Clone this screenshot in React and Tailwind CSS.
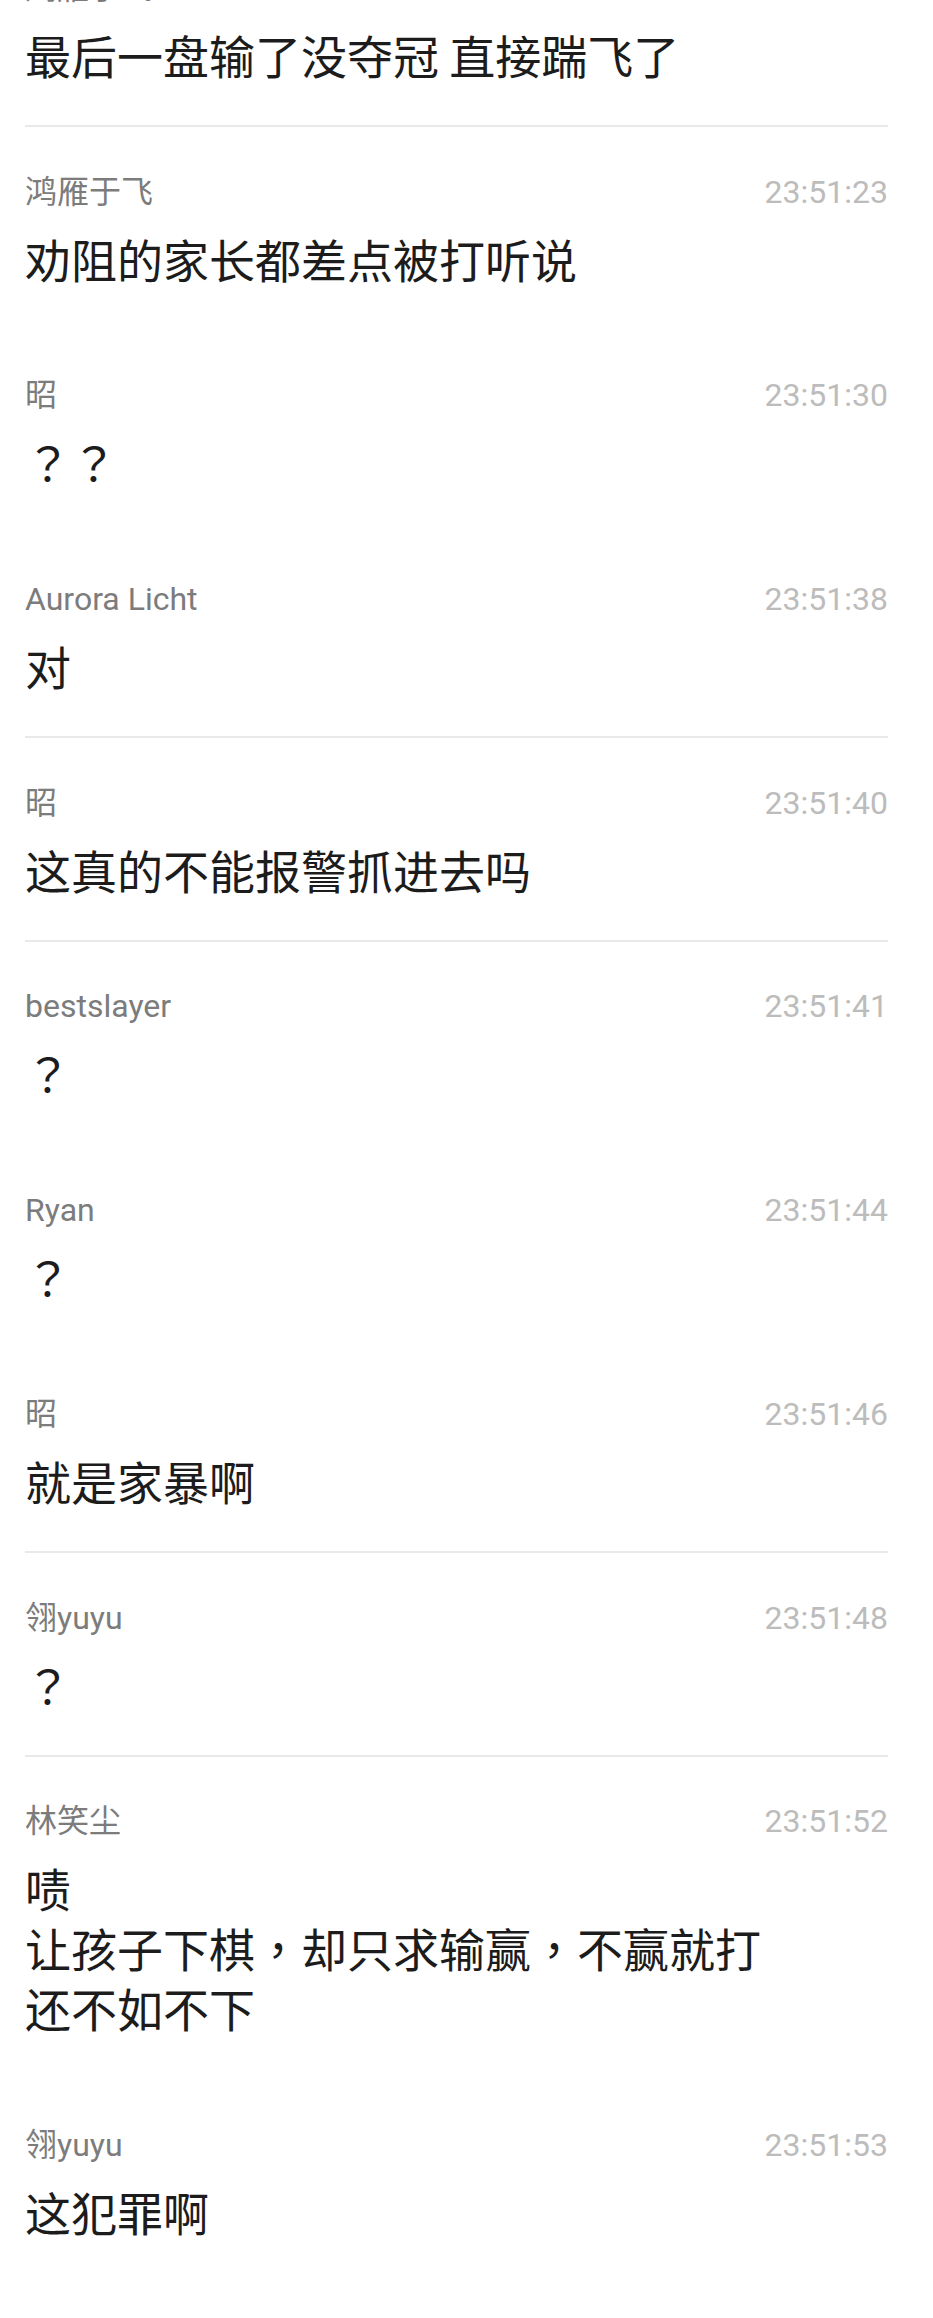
const messages = [
  { name: '鸿雁于飞', time: '23:51:15', lines: ['最后一盘输了没夺冠 直接踹飞了'], rule: false },
  { name: '鸿雁于飞', time: '23:51:23', lines: ['劝阻的家长都差点被打听说'], rule: true },
  { name: '昭', time: '23:51:30', lines: ['？？'], rule: false },
  { name: 'Aurora Licht', time: '23:51:38', lines: ['对'], rule: false },
  { name: '昭', time: '23:51:40', lines: ['这真的不能报警抓进去吗'], rule: true },
  { name: 'bestslayer', time: '23:51:41', lines: ['？'], rule: true },
  { name: 'Ryan', time: '23:51:44', lines: ['？'], rule: false },
  { name: '昭', time: '23:51:46', lines: ['就是家暴啊'], rule: false },
  { name: '翎yuyu', time: '23:51:48', lines: ['？'], rule: true },
  { name: '林笑尘', time: '23:51:52', lines: ['啧', '让孩子下棋，却只求输赢，不赢就打', '还不如不下'], rule: true },
  { name: '翎yuyu', time: '23:51:53', lines: ['这犯罪啊'], rule: false },
];

export default function App() {
  return (
    <div className="h-[2318px] w-[933px] overflow-hidden bg-white">
      <div className="-mt-[78.5px] flex flex-col">
        {messages.map((m, i) => (
          <Message key={i} {...m} />
        ))}
      </div>
    </div>
  );
}

// full-width punctuation sits centred in its cell on the phone, as in the TC face
function Line({ text }) {
  return (
    <div className="whitespace-pre">
      {[...text].map((c, k) =>
        c === '？' || c === '，' ? (
          <span key={k} className="font-['Noto_Sans_CJK_TC',sans-serif]">{c}</span>
        ) : (
          c
        )
      )}
    </div>
  );
}

function Message({ name, time, lines, rule }) {
  return (
    <div className="pl-[25px] pr-[45px]">
      <div className={`h-[2px] ${rule ? 'bg-[#e9e9e9]' : 'bg-transparent'}`} />
      <div className="pt-[44.5px] pb-[41.2px]">
        <div className="flex h-[40px] items-center justify-between font-['Roboto','Noto_Sans_CJK_SC',sans-serif] leading-[40px]">
          <span className="text-[32px] text-[#7c7c7c]">{name}</span>
          <span className="text-[32px] text-[#bcbcbc]">{time}</span>
        </div>
        <div className="mt-[16px] font-['Noto_Sans_CJK_SC',sans-serif] text-[46px] leading-[60px] text-[#1c1c1c]">
          {lines.map((l, j) => (
            <Line key={j} text={l} />
          ))}
        </div>
      </div>
    </div>
  );
}
